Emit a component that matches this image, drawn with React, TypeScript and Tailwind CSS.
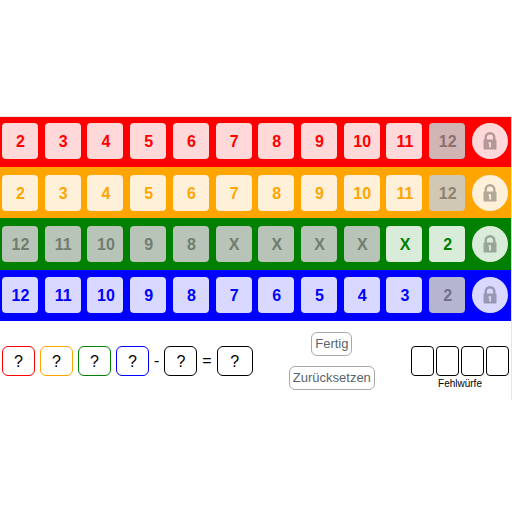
type Row = {
  name: string;
  row: string;
  open: string;
  closed: string;
  lock: string;
  labels: string[];
  disabled: number[];
};

const rows: Row[] = [
  {
    name: 'Rot',
    row: 'bg-[#ff0000] pt-1.5 pb-2',
    open: 'bg-[#ffd9d9] text-[#ff0000]',
    closed: 'bg-[#d1b5b5] text-[#8c7070]',
    lock: 'bg-[#ffd9d9] text-[#b39898]',
    labels: ['2', '3', '4', '5', '6', '7', '8', '9', '10', '11', '12'],
    disabled: [10],
  },
  {
    name: 'Gelb',
    row: 'bg-[#ffa500] pt-2 pb-[7px]',
    open: 'bg-[#fff1d9] text-[#ffa500]',
    closed: 'bg-[#d1c7b5] text-[#8c8370]',
    lock: 'bg-[#fff1d9] text-[#b3a998]',
    labels: ['2', '3', '4', '5', '6', '7', '8', '9', '10', '11', '12'],
    disabled: [10],
  },
  {
    name: 'Grün',
    row: 'bg-[#008000] py-2',
    open: 'bg-[#d9ecd9] text-[#008000]',
    closed: 'bg-[#b7c4b7] text-[#707d70]',
    lock: 'bg-[#d9ecd9] text-[#98a598]',
    labels: ['12', '11', '10', '9', '8', 'X', 'X', 'X', 'X', 'X', '2'],
    disabled: [0, 1, 2, 3, 4, 5, 6, 7, 8],
  },
  {
    name: 'Blau',
    row: 'bg-[#0000ff] pt-[7px] pb-2',
    open: 'bg-[#d9d9ff] text-[#0000ff]',
    closed: 'bg-[#b5b5d1] text-[#70708c]',
    lock: 'bg-[#d9d9ff] text-[#9898b3]',
    labels: ['12', '11', '10', '9', '8', '7', '6', '5', '4', '3', '2'],
    disabled: [10],
  },
];

const dice = ['border-[#ff0000]', 'border-[#ffa500]', 'border-[#008000]', 'border-[#0000ff]'];

function LockIcon() {
  return (
    <svg width="14" height="18" viewBox="0 0 14 18" fill="currentColor" aria-hidden="true">
      <path
        fillRule="evenodd"
        d="M1.5 7.6V5.5a5.5 5.5 0 0 1 11 0V7.6h.3q.7 0 .7.7v8.5q0 .7-.7.7H1.2q-.7 0-.7-.7V8.3q0-.7.7-.7zM3.9 7.6h6.2V5.5a3.1 3.1 0 0 0-6.2 0zM5.5 10.2v1.5h.7v3.8h1.8v-5.3z"
      />
    </svg>
  );
}

function Die({ border, width = 'w-[33px]' }: { border: string; width?: string }) {
  return (
    <output className={`flex h-[30px] items-center justify-center rounded-md border pt-0.5 ${border} ${width}`}>
      ?
    </output>
  );
}

function ScoreRow({ row }: { row: Row }) {
  return (
    <div className={`flex justify-between pr-[3px] pl-0.5 ${row.row}`}>
      {row.labels.map((label, i) => {
        const disabled = row.disabled.includes(i);
        return (
          <button
            key={i}
            type="button"
            disabled={disabled}
            className={`size-9 rounded-sm pt-px pl-px text-center text-base font-bold ${disabled ? row.closed : row.open}`}
          >
            {label}
          </button>
        );
      })}
      <button
        type="button"
        aria-label={`${row.name} abschließen`}
        className={`flex size-9 items-center justify-center rounded-full ${row.lock}`}
      >
        <LockIcon />
      </button>
    </div>
  );
}

export default function App() {
  const action = 'h-6 rounded-md border border-[#a9a9ad] px-[3px] text-[13px] leading-5 text-[#5a636c]';
  return (
    <div className="min-h-screen bg-white pt-29 font-['Liberation_Sans',Arial,sans-serif] text-black">
      <main className="border-t border-r border-[#e6e6e6]">
        {rows.map((row) => (
          <ScoreRow key={row.name} row={row} />
        ))}
        <div className="flex items-start justify-between pt-[11px] pr-0.5 pb-2 pl-0.5">
          <div className="mt-3.5 flex items-center gap-[5px] text-base">
            {dice.map((border) => (
              <Die key={border} border={border} />
            ))}
            <span>-</span>
            <Die border="border-black" />
            <span>=</span>
            <Die border="border-black" width="w-9" />
          </div>
          <div className="flex flex-col items-center gap-2.5">
            <button type="button" className={action}>Fertig</button>
            <button type="button" className={action}>Zurücksetzen</button>
          </div>
          <fieldset className="mt-3.5 flex flex-col items-center" aria-labelledby="misses">
            <div className="flex gap-0.5">
              {[1, 2, 3, 4].map((n) => (
                <input
                  key={n}
                  type="checkbox"
                  aria-label={`Fehlwurf ${n}`}
                  className="h-[30px] w-[23px] appearance-none rounded-sm border border-black checked:bg-black"
                />
              ))}
            </div>
            <span id="misses" className="text-[10px] leading-4">Fehlwürfe</span>
          </fieldset>
        </div>
      </main>
    </div>
  );
}
